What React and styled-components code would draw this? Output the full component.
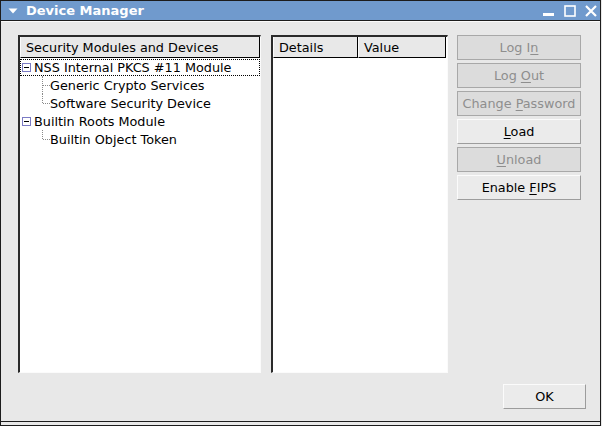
import React from 'react';
import styled, { createGlobalStyle, css } from 'styled-components';

const GlobalStyle = createGlobalStyle`
  html, body { margin: 0; padding: 0; background: #e8e8e8; }
  body {
    font-family: "DejaVu Sans", "Liberation Sans", sans-serif;
    font-size: 12.8px;
    color: #000;
  }
  * { box-sizing: border-box; }
`;

const Window = styled.div`
  width: 601px;
  height: 426px;
  display: flex;
  flex-direction: column;
  border: 1px solid #1c1c1c;
  background: #e8e8e8;
  overflow: hidden;
`;

const TitleBar = styled.div`
  height: 20px;
  flex-shrink: 0;
  display: flex;
  align-items: center;
  padding: 0 3px 0 7px;
  background: #709acd;
  border-bottom: 1px solid #1c1c1c;
  color: #fff;
`;

const TitleText = styled.span`
  font-weight: bold;
  font-size: 13px;
  margin-left: 8px;
`;

const Spacer = styled.div`
  flex: 1;
`;

const Controls = styled.div`
  display: flex;
  gap: 9px;
  align-items: center;
`;

const Body = styled.div`
  flex: 1;
  display: flex;
  flex-direction: column;
  padding: 13px 14px 0 17px;
  border-top: 1px solid #fafafa;
`;

const Main = styled.div`
  display: flex;
  height: 338px;
  flex-shrink: 0;
`;

const Panel = styled.div`
  width: ${(p) => p.$w}px;
  margin-right: ${(p) => p.$mr}px;
  height: 100%;
  background: #fff;
  border-style: solid;
  border-width: 2px 1px 1px 2px;
  border-color: #2a2a2a #fbfbfb #fbfbfb #2a2a2a;
  display: flex;
  flex-direction: column;
`;

const HeaderRow = styled.div`
  display: flex;
  height: 21px;
  flex-shrink: 0;
`;

const HeaderCell = styled.div`
  width: ${(p) => p.$w}px;
  height: 100%;
  display: flex;
  align-items: center;
  padding-left: 5px;
  background: #e8e8e8;
  border-left: 1px solid #fbfbfb;
  border-right: 1px solid #000;
  border-bottom: 1px solid #000;
  white-space: nowrap;
`;

const TreeList = styled.div`
  display: flex;
  flex-direction: column;
`;

const ParentRow = styled.div`
  height: 17px;
  margin-top: 1px;
  display: flex;
  align-items: center;
  padding-left: 1px;
  border: 1px dotted ${(p) => (p.$focused ? '#000' : 'transparent')};
  white-space: nowrap;
`;

const ExpanderBox = styled.svg`
  width: 9px;
  height: 9px;
  margin-right: 3px;
  flex-shrink: 0;
`;

const ChildRow = styled.div`
  height: 18px;
  display: flex;
  align-items: center;
  padding-left: 22px;
  white-space: nowrap;
`;

const Connector = styled.span`
  position: relative;
  width: 8px;
  align-self: stretch;
  flex-shrink: 0;
  &::before {
    content: '';
    position: absolute;
    left: 0;
    top: 0;
    height: ${(p) => (p.$last ? '9px' : '100%')};
    border-left: 1px dotted #8a8a8a;
  }
  &::after {
    content: '';
    position: absolute;
    left: 1px;
    top: 9px;
    width: 7px;
    border-top: 1px dotted #8a8a8a;
  }
`;

const ButtonColumn = styled.div`
  display: flex;
  flex-direction: column;
  gap: 3px;
  margin-left: 9px;
`;

const ActionButton = styled.button`
  width: ${(p) => p.$w || 124}px;
  height: 25px;
  padding: 0;
  font-family: inherit;
  font-size: 12.8px;
  border: 1px solid;
  cursor: default;
  ${(p) =>
    p.disabled
      ? css`
          background: #dcdcdc;
          border-color: #a8a8a8;
          color: #8e8e8e;
        `
      : css`
          background: #ebebeb;
          border-color: #fbfbfb #9c9c9c #9c9c9c #fbfbfb;
          color: #000;
        `}
`;

const Mnemonic = styled.span`
  text-decoration: underline;
  text-underline-offset: 2px;
`;

const Footer = styled.div`
  display: flex;
  justify-content: flex-end;
  margin-top: 11px;
`;

const BottomEdge = styled.div`
  height: 4px;
  flex-shrink: 0;
  border-top: 1px solid #1c1c1c;
`;

const tree = [
  {
    label: 'NSS Internal PKCS #11 Module',
    focused: true,
    children: ['Generic Crypto Services', 'Software Security Device'],
  },
  { label: 'Builtin Roots Module', children: ['Builtin Object Token'] },
];

const buttons = [
  { pre: 'Log I', m: 'n', post: '', disabled: true },
  { pre: 'Log ', m: 'O', post: 'ut', disabled: true },
  { pre: 'Change ', m: 'P', post: 'assword', disabled: true },
  { pre: '', m: 'L', post: 'oad', disabled: false },
  { pre: '', m: 'U', post: 'nload', disabled: true },
  { pre: 'Enable ', m: 'F', post: 'IPS', disabled: false },
];

const Expander = () => (
  <ExpanderBox viewBox="0 0 9 9">
    <rect x="0.5" y="0.5" width="8" height="8" fill="#fff" stroke="#7b7bc4" />
    <line x1="2" y1="4.5" x2="7" y2="4.5" stroke="#000" />
  </ExpanderBox>
);

export default function App() {
  return (
    <>
      <GlobalStyle />
      <Window>
        <TitleBar>
          <svg width="10" height="6" viewBox="0 0 10 6">
            <polygon points="0.5,0.5 9.5,0.5 5,5.5" fill="#fff" />
          </svg>
          <TitleText>Device Manager</TitleText>
          <Spacer />
          <Controls>
            <svg width="12" height="12" viewBox="0 0 12 12">
              <rect x="0" y="8" width="11" height="3" fill="#fff" />
            </svg>
            <svg width="12" height="12" viewBox="0 0 12 12">
              <rect x="1" y="1" width="10" height="10" fill="none" stroke="#fff" strokeWidth="1.6" />
            </svg>
            <svg width="12" height="12" viewBox="0 0 12 12">
              <path d="M1 1 L11 11 M11 1 L1 11" stroke="#fff" strokeWidth="2.2" />
            </svg>
          </Controls>
        </TitleBar>
        <Body>
          <Main>
            <Panel $w={243} $mr={10}>
              <HeaderRow>
                <HeaderCell $w={240}>Security Modules and Devices</HeaderCell>
              </HeaderRow>
              <TreeList>
                {tree.map((node) => (
                  <React.Fragment key={node.label}>
                    <ParentRow $focused={node.focused}>
                      <Expander />
                      {node.label}
                    </ParentRow>
                    {node.children.map((c, i) => (
                      <ChildRow key={c}>
                        <Connector $last={i === node.children.length - 1} />
                        {c}
                      </ChildRow>
                    ))}
                  </React.Fragment>
                ))}
              </TreeList>
            </Panel>
            <Panel $w={177} $mr={0}>
              <HeaderRow>
                <HeaderCell $w={85}>Details</HeaderCell>
                <HeaderCell $w={88}>Value</HeaderCell>
              </HeaderRow>
            </Panel>
            <ButtonColumn>
              {buttons.map((b) => (
                <ActionButton key={b.pre + b.m + b.post} disabled={b.disabled}>
                  {b.pre}
                  <Mnemonic>{b.m}</Mnemonic>
                  {b.post}
                </ActionButton>
              ))}
            </ButtonColumn>
          </Main>
          <Footer>
            <ActionButton $w={83}>OK</ActionButton>
          </Footer>
        </Body>
        <BottomEdge />
      </Window>
    </>
  );
}
